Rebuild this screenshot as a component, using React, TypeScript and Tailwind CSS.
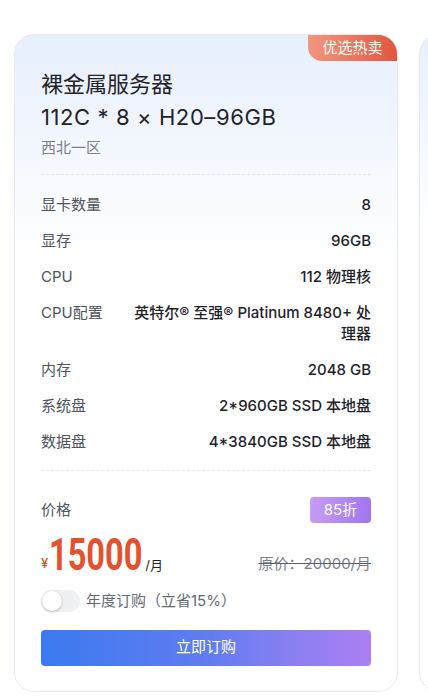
import { useState } from 'react';

type Spec = { label: string; value: string };

const specs: Spec[] = [
  { label: '显卡数量', value: '8' },
  { label: '显存', value: '96GB' },
  { label: 'CPU', value: '112 物理核' },
  { label: 'CPU配置', value: '英特尔® 至强® Platinum 8480+ 处理器' },
  { label: '内存', value: '2048 GB' },
  { label: '系统盘', value: '2*960GB SSD 本地盘' },
  { label: '数据盘', value: '4*3840GB SSD 本地盘' },
];

const font = { fontFamily: 'Inter, "Noto Sans CJK SC", sans-serif' };

function ProductCard({ ghost }: { ghost?: boolean }) {
  const [yearly, setYearly] = useState(false);

  if (ghost) {
    return (
      <div className="w-[384px] h-[658px] shrink-0 rounded-[20px] border border-[#e6ebf3] bg-gradient-to-b from-[#e8f0fd] via-white via-[30%] to-white" />
    );
  }

  return (
    <div className="relative w-[384px] h-[658px] shrink-0 overflow-hidden rounded-[20px] border border-[#e6ebf3] bg-gradient-to-b from-[#e7effd] via-white via-[34%] to-white">
      {/* Hot badge */}
      <div className="absolute right-0 top-0 flex h-[26px] w-[89px] items-center justify-center rounded-bl-[14px] bg-gradient-to-r from-[#f2967f] to-[#e2553d] text-[15px] text-white">
        优选热卖
      </div>

      <div className="px-[26px] pt-[33px] pb-[26px]">
        {/* Header */}
        <div className="text-[22px] leading-[33px] text-[#1f2329]">
          <div>裸金属服务器</div>
          <div className="tracking-[0.6px]">112C * 8 × H20–96GB</div>
        </div>
        <div className="mt-[4px] text-[15px] leading-[20px] text-[#7b8089]">西北一区</div>

        <div className="mt-[16px] border-t border-dashed border-[#e3e7ee]" />

        {/* Specs */}
        <div className="pt-[11px] pb-[11px]">
          {specs.map((s) => (
            <div key={s.label} className="flex py-[7.5px] text-[15px] leading-[21px]">
              <div className="w-[80px] shrink-0 text-[#4e5460]">{s.label}</div>
              <div className="flex-1 text-right font-medium text-[#1f2329]">{s.value}</div>
            </div>
          ))}
        </div>

        <div className="border-t border-dashed border-[#e3e7ee]" />

        {/* Price */}
        <div className="mt-[26px] flex items-center justify-between">
          <span className="text-[15px] text-[#4e5460]">价格</span>
          <span className="flex h-[26px] w-[61px] items-center justify-center rounded-[4px] bg-gradient-to-r from-[#c79cf6] to-[#a274ee] text-[15px] text-white">
            85折
          </span>
        </div>

        <div className="mt-[10px] flex items-end justify-between">
          <div className="flex items-end">
            <span className="mb-[4px] mr-[1px] text-[13px] font-medium text-[#e3512f]">¥</span>
            <span className="inline-block w-[91px] overflow-visible">
              <span
                className="inline-block origin-left scale-x-[0.74] text-[44px] leading-[44px] font-bold text-[#e3512f]"
                style={{ fontFamily: 'Roboto, "Liberation Sans", sans-serif' }}
              >
                15000
              </span>
            </span>
            <span className="mb-[2px] ml-[5px] text-[13px] text-[#1f2329]">/月</span>
          </div>
          <span className="mb-[2px] text-[15px] text-[#7b8089] line-through decoration-[#5b606a]">原价：20000/月</span>
        </div>

        {/* Yearly toggle */}
        <div className="mt-[13px] flex items-center gap-[6px]">
          <button
            onClick={() => setYearly(!yearly)}
            className={`relative h-[22px] w-[39px] rounded-full ${yearly ? 'bg-[#3c7af0]' : 'bg-[#eef0f2]'}`}
          >
            <span
              className={`absolute top-[1px] h-[20px] w-[20px] rounded-full bg-white shadow-[0_1px_3px_rgba(0,0,0,0.25)] ${yearly ? 'left-[18px]' : 'left-[1px]'}`}
            />
          </button>
          <span className="text-[15px] text-[#646a73]">年度订购（立省15%）</span>
        </div>

        {/* Buy */}
        <button className="mt-[17px] flex h-[36px] w-full items-center justify-center rounded-[4px] bg-gradient-to-r from-[#3a7af0] via-[#5f7cf0] to-[#ab80f2] text-[15px] text-white">
          立即订购
        </button>
      </div>
    </div>
  );
}

export default function App() {
  return (
    <div className="h-[698px] w-[428px] overflow-hidden bg-white" style={font}>
      <div className="flex gap-[21px] pl-[14px] pt-[34px]">
        <ProductCard />
        <ProductCard ghost />
      </div>
    </div>
  );
}
